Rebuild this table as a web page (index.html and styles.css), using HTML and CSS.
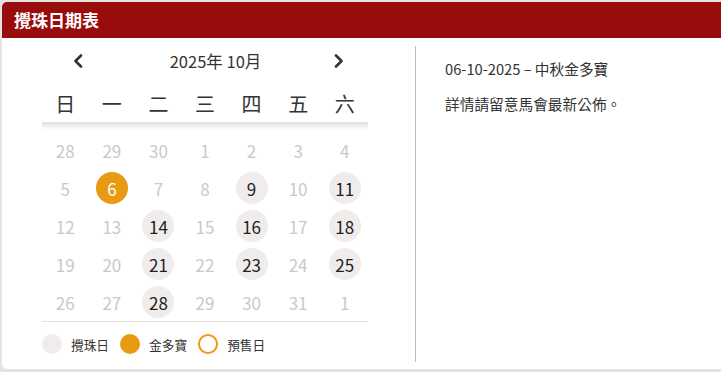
FILE: index.html
```html
<!DOCTYPE html>
<html lang="zh-Hant">
<head>
<meta charset="utf-8">
<link rel="stylesheet" href="styles.css">
</head>
<body>
<div class="card">
  <div class="card-head">攪珠日期表</div>
  <div class="card-body">
    <div class="cal-col">
      <div class="cal">
        <div class="nav">
          <svg class="arrow" width="10" height="14" viewBox="0 0 10 14"><path d="M8 1.5 L2.5 7 L8 12.5" fill="none" stroke="#333" stroke-width="2.6" stroke-linecap="round" stroke-linejoin="round"/></svg>
          <span class="month">2025年 10月</span>
          <svg class="arrow" width="10" height="14" viewBox="0 0 10 14"><path d="M2 1.5 L7.5 7 L2 12.5" fill="none" stroke="#333" stroke-width="2.6" stroke-linecap="round" stroke-linejoin="round"/></svg>
        </div>
        <div class="weekdays">
          <span>日</span><span>一</span><span>二</span><span>三</span><span>四</span><span>五</span><span>六</span>
        </div>
        <div class="shade"></div>
        <div class="days">
          <span class="d off">28</span><span class="d off">29</span><span class="d off">30</span><span class="d off">1</span><span class="d off">2</span><span class="d off">3</span><span class="d off">4</span>
          <span class="d off">5</span><span class="d jackpot">6</span><span class="d off">7</span><span class="d off">8</span><span class="d draw">9</span><span class="d off">10</span><span class="d draw">11</span>
          <span class="d off">12</span><span class="d off">13</span><span class="d draw">14</span><span class="d off">15</span><span class="d draw">16</span><span class="d off">17</span><span class="d draw">18</span>
          <span class="d off">19</span><span class="d off">20</span><span class="d draw">21</span><span class="d off">22</span><span class="d draw">23</span><span class="d off">24</span><span class="d draw">25</span>
          <span class="d off">26</span><span class="d off">27</span><span class="d draw">28</span><span class="d off">29</span><span class="d off">30</span><span class="d off">31</span><span class="d off">1</span>
        </div>
        <div class="legend">
          <span class="dot dot-draw"></span><span class="lg-text">攪珠日</span>
          <span class="dot dot-jackpot"></span><span class="lg-text">金多寶</span>
          <span class="dot dot-presale"></span><span class="lg-text">預售日</span>
        </div>
      </div>
    </div>
    <div class="info-col">
      <p class="info">06-10-2025 – 中秋金多寶</p>
      <p class="info">詳情請留意馬會最新公佈。</p>
    </div>
  </div>
</div>
</body>
</html>
```
FILE: styles.css
```css
* { box-sizing: border-box; }
html, body { margin: 0; padding: 0; }
body {
  background: #e4e4e4;
  font-family: "Noto Sans CJK TC", "Noto Sans", sans-serif;
  color: #333;
  width: 721px;
  height: 372px;
  overflow: hidden;
}
.card {
  margin: 2px 0 0 2px;
  height: 367px;
  background: #fff;
  border-radius: 5px 0 0 5px;
  overflow: hidden;
}
.card-head {
  height: 36px;
  line-height: 36px;
  background: #980c0c;
  color: #fff;
  font-size: 17px;
  font-weight: 700;
  padding-left: 12px;
}
.card-body {
  display: flex;
  padding-top: 8px;
}
.cal-col {
  width: 414px;
  height: 316px;
  border-right: 1px solid #bdbdbd;
  padding-left: 40px;
}
.cal { width: 326px; }
.nav {
  height: 30px;
  display: flex;
  align-items: center;
  padding-left: 31px;
  padding-right: 24px;
}
.arrow { display: block; }
.month {
  flex: 1;
  text-align: center;
  font-size: 16.5px;
  padding-left: 14px;
  color: #333;
}
.weekdays {
  margin-top: 8px;
  height: 38px;
  display: grid;
  grid-template-columns: repeat(7, 1fr);
  align-items: center;
  justify-items: center;
  font-size: 20px;
  color: #333;
}
.shade {
  height: 8px;
  background: linear-gradient(#e0e0e0, #ffffff);
}
.days {
  margin-top: 1px;
  display: grid;
  grid-template-columns: repeat(7, 1fr);
  grid-auto-rows: 38px;
  align-items: center;
  justify-items: center;
  border-bottom: 1px solid #e0e0e0;
}
.d {
  width: 32px;
  height: 32px;
  border-radius: 50%;
  display: flex;
  align-items: center;
  justify-content: center;
  font-size: 17px;
}
.off { color: #c9c9c9; }
.draw { background: #f1ecec; color: #222; }
.jackpot { background: #e79a12; color: #fff; }
.legend {
  margin-top: 12px;
  display: flex;
  align-items: center;
  height: 20px;
}
.dot {
  width: 20px;
  height: 20px;
  border-radius: 50%;
  flex: none;
}
.dot-draw { background: #f1ecec; }
.dot-jackpot { background: #e79a12; }
.dot-presale { border: 2px solid #e79a12; }
.lg-text {
  font-size: 12.7px;
  color: #333;
  margin-left: 9px;
  margin-right: 11px;
}
.info-col {
  padding-left: 29px;
  padding-top: 12px;
}
.info {
  margin: 0 0 13px 0;
  font-size: 14.7px;
  line-height: 22px;
  color: #333;
}
```
